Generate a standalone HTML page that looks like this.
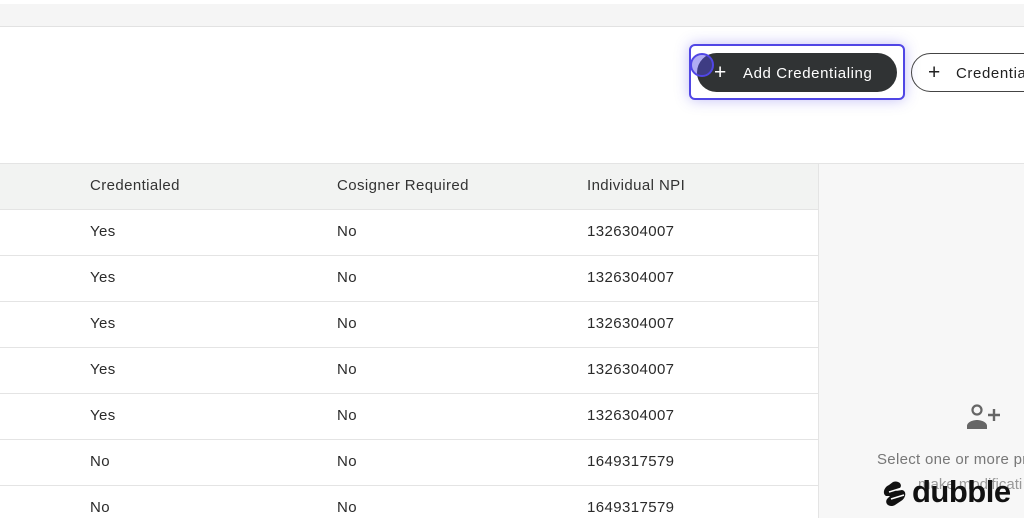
<!DOCTYPE html>
<html><head><style>
html,body{margin:0;width:1024px;height:518px;overflow:hidden}
body{background:#fff;font-family:"Liberation Sans",sans-serif;position:relative}
.top{position:absolute;left:0;top:4px;width:1024px;height:22px;background:#f5f5f5;border-bottom:1px solid #e2e2e2}
.hdr{position:absolute;left:0;top:163px;width:818px;height:45px;background:#f2f3f2;border-top:1px solid #e4e4e4;border-bottom:1px solid #e4e4e4}
.row{position:absolute;left:0;width:818px;height:45px;border-bottom:1px solid #e4e4e4}
.c{position:absolute;font-size:15px;letter-spacing:0.4px;color:#2a2a2a;line-height:16px;top:14px}
.panel{position:absolute;left:818px;top:163px;width:206px;height:355px;background:#f7f7f7;border-left:1px solid #e4e4e4;border-top:1px solid #e4e4e4;box-sizing:border-box}
</style></head><body>
<div class="top"></div>
<div style="position:absolute;left:689px;top:44px;width:212px;height:52px;border:2px solid #5046e5;border-radius:6px;box-shadow:0 0 14px rgba(80,70,229,.35);background:#fff"></div>
<div style="position:absolute;left:697px;top:53px;width:200px;height:39px;border-radius:20px;background:#303334;color:#fff;font-size:15px;letter-spacing:0.6px;line-height:39px"><span style="position:absolute;left:17px;font-size:21px">+</span><span style="position:absolute;left:46px;top:1px">Add Credentialing</span></div>
<div style="position:absolute;left:690px;top:53px;width:24px;height:24px;border-radius:50%;background:rgba(80,70,229,.45);border:2px solid #5046e5;box-sizing:border-box"></div>
<div style="position:absolute;left:911px;top:53px;width:140px;height:37px;border-radius:20px;border:1px solid #444;color:#222;font-size:15px;letter-spacing:0.6px;line-height:37px"><span style="position:absolute;left:16px;font-size:21px">+</span><span style="position:absolute;left:44px;top:1px">Credentialing</span></div>
<div class="hdr"><span class="c" style="left:90px;color:#333">Credentialed</span><span class="c" style="left:337px;color:#333">Cosigner Required</span><span class="c" style="left:587px;color:#333">Individual NPI</span></div>
<div class="row" style="top:210px"><span class="c" style="left:90px">Yes</span><span class="c" style="left:337px">No</span><span class="c" style="left:587px">1326304007</span></div>
<div class="row" style="top:256px"><span class="c" style="left:90px">Yes</span><span class="c" style="left:337px">No</span><span class="c" style="left:587px">1326304007</span></div>
<div class="row" style="top:302px"><span class="c" style="left:90px">Yes</span><span class="c" style="left:337px">No</span><span class="c" style="left:587px">1326304007</span></div>
<div class="row" style="top:348px"><span class="c" style="left:90px">Yes</span><span class="c" style="left:337px">No</span><span class="c" style="left:587px">1326304007</span></div>
<div class="row" style="top:394px"><span class="c" style="left:90px">Yes</span><span class="c" style="left:337px">No</span><span class="c" style="left:587px">1326304007</span></div>
<div class="row" style="top:440px"><span class="c" style="left:90px">No</span><span class="c" style="left:337px">No</span><span class="c" style="left:587px">1649317579</span></div>
<div class="row" style="top:486px;border-bottom:none"><span class="c" style="left:90px">No</span><span class="c" style="left:337px">No</span><span class="c" style="left:587px">1649317579</span></div>
<div class="panel"></div>
<svg style="position:absolute;left:965px;top:403px" width="38" height="28" viewBox="0 0 38 28"><circle cx="12" cy="7" r="4.5" fill="none" stroke="#666" stroke-width="2.2"/><path d="M2 26v-3c0-4 6-6 10-6s10 2 10 6v3z" fill="#666"/><path d="M29 6v12M23 12h12" stroke="#666" stroke-width="2.4"/></svg>
<div style="position:absolute;left:877px;top:451px;font-size:15px;letter-spacing:0.3px;color:#777;white-space:nowrap">Select one or more pr</div>
<div style="position:absolute;left:918px;top:476px;font-size:15px;color:#999;white-space:nowrap">make modificati</div>
<svg style="position:absolute;left:883px;top:480px" width="28" height="28" viewBox="0 0 28 28"><path d="M10 2c5-2 10 2 7 6l-4 3 6-1c5 1 4 8-1 11l-6 4c-5 3-11-1-8-6l3-3-4 0C-1 14 1 7 6 5z" fill="#111"/><path d="M6 12l13-4M8 19l13-4" stroke="#fff" stroke-width="1.5"/></svg>
<div style="position:absolute;left:912px;top:474px;font-size:31px;font-weight:bold;color:#111;letter-spacing:-0.5px;line-height:36px">dubble</div>
</body></html>
